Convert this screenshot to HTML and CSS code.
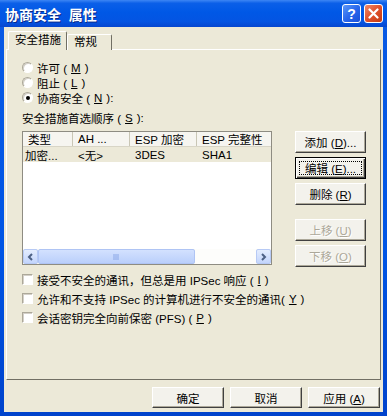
FILE: index.html
```html
<!DOCTYPE html>
<html lang="zh">
<head>
  <meta charset="UTF-8">
  <meta name="viewport" content="width=device-width, initial-scale=1">
  <title>协商安全 属性</title>
  <link rel="stylesheet" href="styles.css">
</head>
<body>
  <div class="window">
    <!-- 標題列 -->
    <div class="titlebar">
      <span class="title">协商安全&nbsp;&nbsp;属性</span>
      <div class="caption-btns">
        <span class="cap-btn help">?</span>
        <span class="cap-btn close">
          <svg width="11" height="11" viewBox="0 0 11 11"><path d="M1.5 1.5 L9.5 9.5 M9.5 1.5 L1.5 9.5" stroke="#fff" stroke-width="2.2" stroke-linecap="round"/></svg>
        </span>
      </div>
    </div>

    <div class="client">
      <div class="tabs">
        <div class="tab active">安全措施</div>
        <div class="tab">常规</div>
      </div>

      <div class="panel">
        <div class="radio-row"><span class="radio"></span>许可 (<u>M</u>)</div>
        <div class="radio-row"><span class="radio"></span>阻止 (<u>L</u>)</div>
        <div class="radio-row"><span class="radio checked"></span>协商安全 (<u>N</u>):</div>

        <div class="list-label">安全措施首选顺序 (<u>S</u>):</div>

        <div class="list-row">
          <div class="listview">
            <div class="lv-header">
              <div class="lv-col c1">类型</div>
              <div class="lv-col c2">AH ...</div>
              <div class="lv-col c3">ESP 加密</div>
              <div class="lv-col c4">ESP 完整性</div>
            </div>
            <div class="lv-body">
              <div class="lv-item selected">
                <div class="lv-cell c1 first">加密...</div>
                <div class="lv-cell c2">&lt;无&gt;</div>
                <div class="lv-cell c3">3DES</div>
                <div class="lv-cell c4">SHA1</div>
              </div>
            </div>
            <div class="hscroll">
              <span class="sb-btn">
                <svg width="7" height="8" viewBox="0 0 7 8"><path d="M5 1 L2 4 L5 7" fill="none" stroke="#4D6185" stroke-width="2"/></svg>
              </span>
              <span class="sb-thumb">
                <svg width="7" height="6" viewBox="0 0 7 6"><path d="M1 0 V6 M3 0 V6 M5 0 V6" stroke="#8AA7E6" stroke-width="1"/></svg>
              </span>
              <span class="sb-track"></span>
              <span class="sb-btn">
                <svg width="7" height="8" viewBox="0 0 7 8"><path d="M2 1 L5 4 L2 7" fill="none" stroke="#4D6185" stroke-width="2"/></svg>
              </span>
            </div>
          </div>

          <div class="side-btns">
            <button class="btn">添加 (<u>D</u>)...</button>
            <button class="btn default">编辑 (<u>E</u>)...</button>
            <button class="btn">删除 (<u>R</u>)</button>
            <button class="btn disabled spaced">上移 (<u>U</u>)</button>
            <button class="btn disabled">下移 (<u>O</u>)</button>
          </div>
        </div>

        <div class="checks">
          <div class="check-row"><span class="checkbox"></span>接受不安全的通讯，但总是用 IPSec 响应 (<u>I</u>)</div>
          <div class="check-row"><span class="checkbox"></span>允许和不支持 IPSec 的计算机进行不安全的通讯(<u>Y</u>)</div>
          <div class="check-row"><span class="checkbox"></span>会话密钥完全向前保密 (PFS) (<u>P</u>)</div>
        </div>
      </div>

      <div class="footer">
        <button class="btn wide">确定</button>
        <button class="btn wide">取消</button>
        <button class="btn wide">应用 (<u>A</u>)</button>
      </div>
    </div>
  </div>
</body>
</html>
```

FILE: styles.css
```css
body {
  margin: 0;
  font-family: "Liberation Sans", "Noto Sans CJK SC", sans-serif;
  font-size: 11.5px;
  color: #000;
}
u {
  text-decoration: underline;
}
.window {
  width: 387px;
  height: 416px;
  display: flex;
  flex-direction: column;
  background: linear-gradient(to bottom, #0A5AE4 0%, #0055E5 60%, #0043CC 100%);
}

/* 標題列 */
.titlebar {
  height: 27px;
  flex: none;
  display: flex;
  align-items: center;
  justify-content: space-between;
  padding: 0 4px 0 5px;
  background: linear-gradient(to bottom, #3D86F4 0%, #0B5FE8 12%, #0058E6 45%, #0454E2 80%, #0646CF 100%);
}
.title {
  color: #fff;
  font-weight: bold;
  font-size: 14px;
  text-shadow: 1px 1px #0A2A8A;
}
.caption-btns {
  display: flex;
  gap: 3px;
}
.cap-btn {
  width: 19px;
  height: 19px;
  box-sizing: border-box;
  border: 1px solid #fff;
  border-radius: 3px;
  display: flex;
  align-items: center;
  justify-content: center;
  color: #fff;
  font-weight: bold;
  font-size: 14px;
}
.cap-btn.help {
  background: linear-gradient(135deg, #5C98F8 0%, #2A68EC 50%, #1A4FD8 100%);
}
.cap-btn.close {
  background: linear-gradient(135deg, #F08A6A 0%, #E0502A 50%, #C23A12 100%);
}

/* 對話框內容 */
.client {
  flex: 1;
  margin: 0 4px 4px;
  padding: 5px 2px 0;
  background: #ECE9D8;
  display: flex;
  flex-direction: column;
}
.tabs {
  display: flex;
  align-items: flex-end;
  height: 18px;
  padding-left: 2px;
  margin-bottom: -1px;
  position: relative;
  z-index: 1;
}
.tab {
  box-sizing: border-box;
  width: 45px;
  height: 16px;
  padding-left: 6px;
  line-height: 15px;
  border: 1px solid;
  border-color: #fff #716F64 transparent #fff;
  border-bottom: none;
  border-radius: 2px 2px 0 0;
  background: #ECE9D8;
}
.tab.active {
  width: 59px;
  height: 19px;
  line-height: 17px;
}
.panel {
  box-sizing: border-box;
  height: 331px;
  border: 1px solid;
  border-color: #fff #716F64 #716F64 #fff;
  padding: 10px 13px 0 15px;
}

.radio-row, .list-label {
  height: 15px;
  display: flex;
  align-items: center;
  gap: 4px;
  white-space: nowrap;
}
.radio {
  width: 11px;
  height: 11px;
  box-sizing: border-box;
  border-radius: 50%;
  background: #fff;
  border: 1px solid;
  border-color: #ACA899 #fff #fff #ACA899;
  box-shadow: inset 1px 1px #D4D0C8;
  display: flex;
  align-items: center;
  justify-content: center;
}
.radio.checked::after {
  content: "";
  width: 4px;
  height: 4px;
  border-radius: 50%;
  background: #000;
}
.list-label {
  margin-top: 5px;
}

.list-row {
  display: flex;
  gap: 23px;
  margin-top: 6px;
}
.listview {
  box-sizing: border-box;
  width: 250px;
  height: 134px;
  border: 1px solid #8E8C82;
  background: #fff;
  display: flex;
  flex-direction: column;
}
.lv-header, .lv-item {
  display: flex;
  align-items: center;
  white-space: nowrap;
}
.lv-header {
  height: 14px;
  background: #F6F5F0;
  border-bottom: 1px solid #D8D5C6;
}
.lv-col, .lv-cell {
  box-sizing: border-box;
  padding-left: 5px;
  flex: none;
}
.lv-col {
  height: 14px;
  display: flex;
  align-items: center;
  border-right: 1px solid #C9C6B5;
}
.c1 { width: 50px; }
.c2 { width: 57px; }
.c3 { width: 67px; }
.c4 { width: 73px; border-right: none; }
.lv-cell.first {
  padding-left: 2px;
}
.lv-body {
  flex: 1;
}
.lv-item {
  height: 15px;
}
.lv-item.selected {
  background: #ECE9D8;
}

.hscroll {
  height: 15px;
  display: flex;
  background: #F7F7F3;
}
.sb-btn {
  box-sizing: border-box;
  width: 15px;
  height: 15px;
  border: 1px solid #B7CAF5;
  border-radius: 2px;
  background: linear-gradient(to bottom, #E4EDFE, #C3D5FC);
  display: flex;
  align-items: center;
  justify-content: center;
}
.sb-thumb {
  box-sizing: border-box;
  width: 157px;
  height: 15px;
  border: 1px solid #AFC4F4;
  border-radius: 2px;
  background: linear-gradient(to bottom, #D3E1FE, #BACFFB);
  display: flex;
  align-items: center;
  justify-content: center;
}
.sb-track {
  flex: 1;
  background: #FDFDFB;
}

/* 按鈕 */
.side-btns {
  display: flex;
  flex-direction: column;
  gap: 4px;
}
.btn {
  box-sizing: border-box;
  width: 71px;
  height: 22px;
  padding: 0;
  font: inherit;
  color: #000;
  background: #F3F2EC;
  border: 1px solid;
  border-color: #fff #404040 #404040 #fff;
  box-shadow: inset -1px -1px #ACA899;
  white-space: nowrap;
}
.btn.default {
  border-color: #000;
  box-shadow: inset 1px 1px #fff, inset -1px -1px #404040, inset -2px -2px #ACA899;
  outline: 1px dotted #000;
  outline-offset: -5px;
}
.btn.disabled {
  color: #ACA899;
  text-shadow: 1px 1px #fff;
}
.btn.spaced {
  margin-top: 10px;
}

.checks {
  margin-top: 3px;
}
.check-row {
  height: 19px;
  display: flex;
  align-items: center;
  gap: 4px;
  white-space: nowrap;
}
.checkbox {
  width: 11px;
  height: 11px;
  box-sizing: border-box;
  background: #fff;
  border: 1px solid;
  border-color: #ACA899 #fff #fff #ACA899;
  box-shadow: inset 1px 1px #D4D0C8;
}

.footer {
  display: flex;
  justify-content: flex-end;
  gap: 6px;
  margin-top: 7px;
  padding-right: 1px;
}
.btn.wide {
  width: 72px;
  height: 21px;
}
```
